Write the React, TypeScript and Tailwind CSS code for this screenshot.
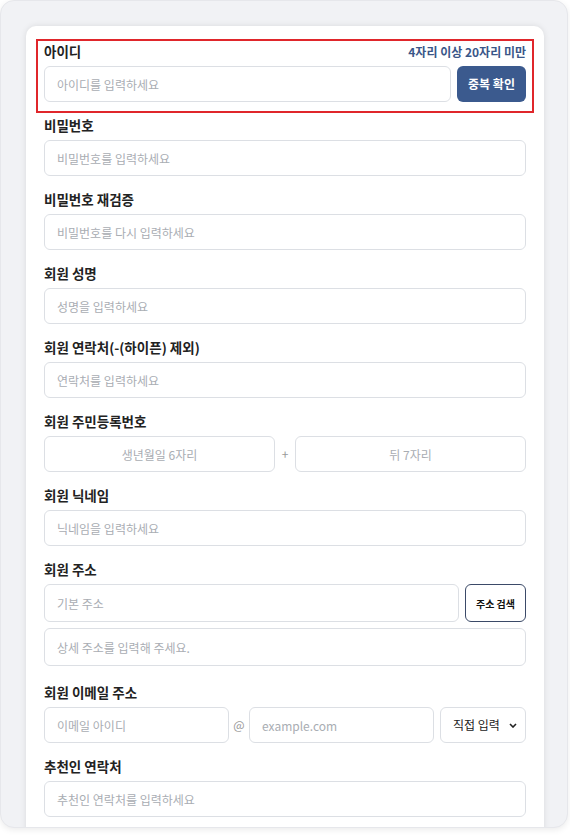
import React from 'react';

const inputCls =
  'w-full h-[36px] rounded-[6px] border border-[#dcdfe4] bg-white px-3 text-[12px] text-[#333] placeholder:text-[#a9adb3] outline-none';

interface FieldProps {
  label: string;
  hint?: string;
  highlight?: boolean;
  children: React.ReactNode;
}

const Field: React.FC<FieldProps> = ({ label, hint, highlight, children }) => (
  <div className={`border-2 ${highlight ? 'border-[#e0262b]' : 'border-transparent'} px-[6px] pt-[2px] pb-[9px]`}>
    <div className="flex items-center justify-between h-[17px] mb-[6px]">
      <span className="text-[13.5px] font-bold text-[#222]">{label}</span>
      {hint && <span className="text-[12px] font-semibold text-[#3a5688]">{hint}</span>}
    </div>
    {children}
  </div>
);

export default function App() {
  return (
    <div className="min-h-screen bg-white" style={{ fontFamily: '"Noto Sans CJK KR", "Noto Sans", sans-serif' }}>
      <div className="w-[568px] h-[828px] overflow-hidden rounded-[14px] border border-[#e6e7eb] bg-[#f1f2f5] shadow-[0_2px_6px_rgba(0,0,0,0.08)]">
        <div className="ml-[25px] mt-[25px] w-[518px] h-[820px] rounded-t-[10px] bg-white px-[10px] pt-[13px] shadow-[0_0_6px_rgba(0,0,0,0.10)]">
          <Field label="아이디" hint="4자리 이상 20자리 미만" highlight>
            <div className="flex gap-[6px]">
              <input className={inputCls} placeholder="아이디를 입력하세요" />
              <button className="shrink-0 w-[69px] h-[36px] rounded-[6px] bg-[#3b5a8e] text-[12px] font-bold text-white">
                중복 확인
              </button>
            </div>
          </Field>
          <Field label="비밀번호">
            <input type="password" className={inputCls} placeholder="비밀번호를 입력하세요" />
          </Field>
          <Field label="비밀번호 재검증">
            <input type="password" className={inputCls} placeholder="비밀번호를 다시 입력하세요" />
          </Field>
          <Field label="회원 성명">
            <input className={inputCls} placeholder="성명을 입력하세요" />
          </Field>
          <Field label="회원 연락처(-(하이픈) 제외)">
            <input className={inputCls} placeholder="연락처를 입력하세요" />
          </Field>
          <Field label="회원 주민등록번호">
            <div className="flex items-center">
              <input className={`${inputCls} text-center`} placeholder="생년월일 6자리" />
              <span className="w-[20px] shrink-0 text-center text-[12px] text-[#999]">+</span>
              <input className={`${inputCls} text-center`} placeholder="뒤 7자리" />
            </div>
          </Field>
          <Field label="회원 닉네임">
            <input className={inputCls} placeholder="닉네임을 입력하세요" />
          </Field>
          <Field label="회원 주소">
            <div className="flex gap-[6px]">
              <input className={`${inputCls} h-[38px] text-[11px]`} placeholder="기본 주소" />
              <button className="shrink-0 w-[61px] h-[38px] rounded-[6px] border border-[#3b4a68] bg-white text-[10px] font-bold text-[#111]">
                주소 검색
              </button>
            </div>
            <input className={`${inputCls} mt-[6px] mb-[3px] h-[38px] text-[11px]`} placeholder="상세 주소를 입력해 주세요." />
          </Field>
          <Field label="회원 이메일 주소">
            <div className="flex items-center">
              <input className={inputCls} placeholder="이메일 아이디" />
              <span className="w-[20px] shrink-0 text-center text-[12px] text-[#999]">@</span>
              <input className={inputCls} placeholder="example.com" />
              <div className="relative ml-[6px] shrink-0 w-[86px]">
                <select className="h-[36px] w-full appearance-none rounded-[6px] border border-[#dcdfe4] bg-white pl-[12px] text-[12px] text-[#222] outline-none">
                  <option>직접 입력</option>
                </select>
                <svg className="pointer-events-none absolute right-[9px] top-[16px]" width="8" height="5" viewBox="0 0 8 5">
                  <path d="M1 1l3 3 3-3" fill="none" stroke="#222" strokeWidth="1.6" />
                </svg>
              </div>
            </div>
          </Field>
          <Field label="추천인 연락처">
            <input className={inputCls} placeholder="추천인 연락처를 입력하세요" />
          </Field>
        </div>
      </div>
    </div>
  );
}
